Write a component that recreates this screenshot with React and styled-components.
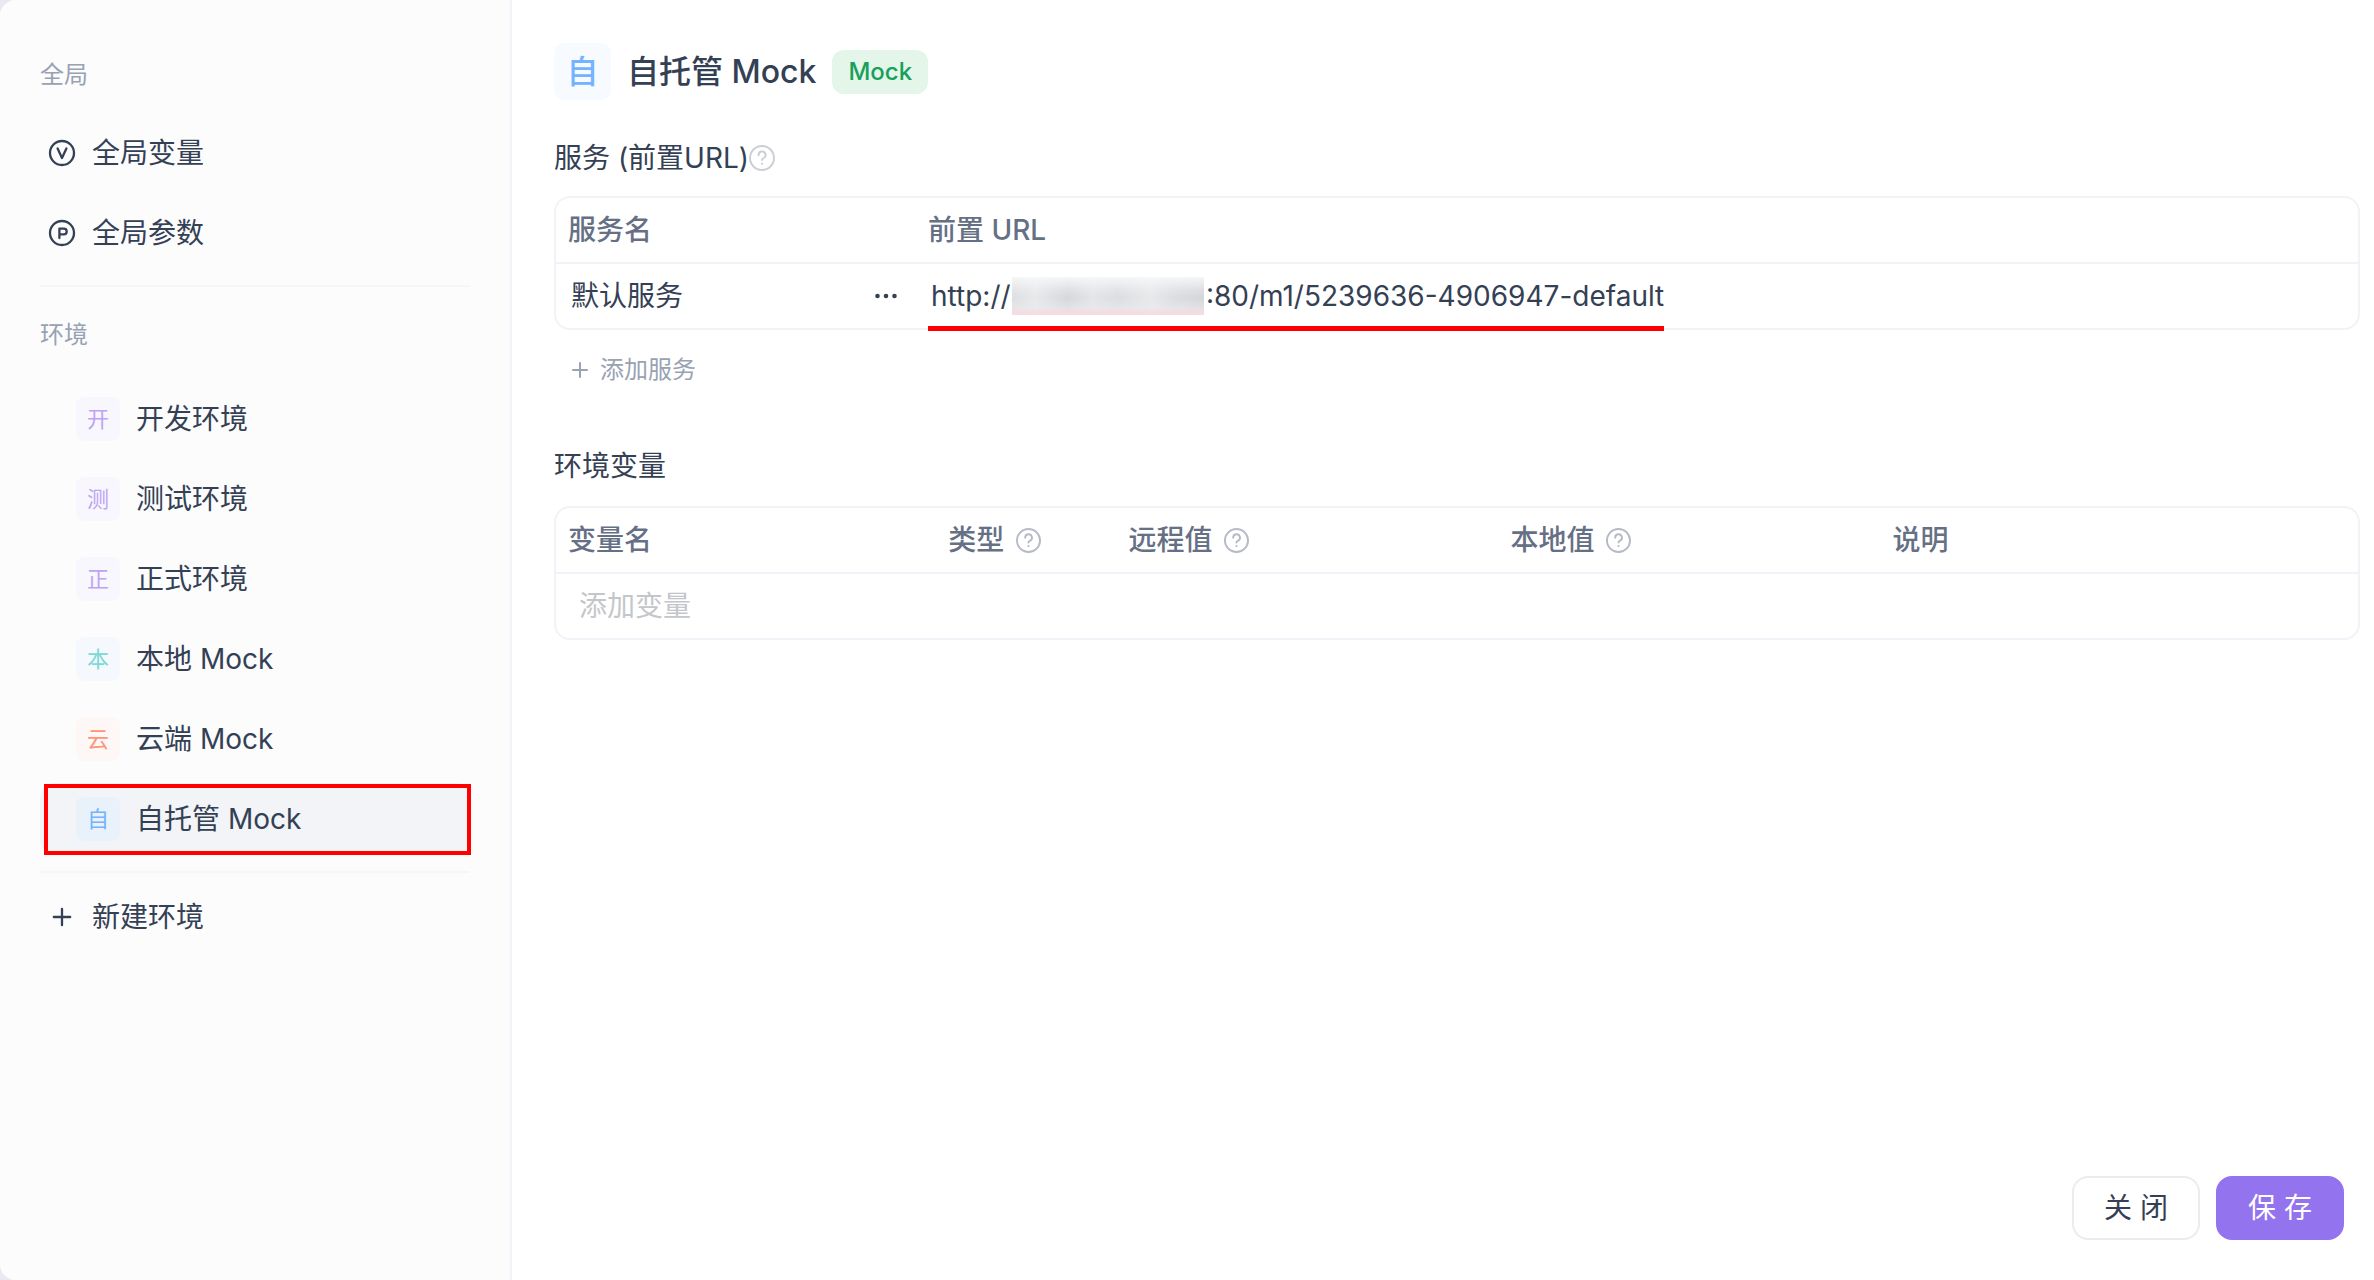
import styled, { createGlobalStyle } from "styled-components";

const GlobalStyle = createGlobalStyle`
  * {
    box-sizing: border-box;
  }

  body {
    margin: 0;
    background-color: #e9e9f1;
    font-family: Inter, "Noto Sans CJK SC", sans-serif;
    font-size: 28px;
    line-height: 40px;
    color: #344054;
  }

  button,
  input {
    font: inherit;
    color: inherit;
  }
`;

const Dialog = styled.div`
  display: flex;
  min-height: 100vh;
  background-color: #fff;
  border-radius: 16px 0 0 16px;
  overflow: hidden;
`;

const Sidebar = styled.nav`
  flex: 0 0 512px;
  padding: 55px 40px;
  background-color: #fcfcfd;
  border-right: 2px solid #f2f2f8;
`;

const GroupTitle = styled.h2`
  margin: 0;
  font-size: 24px;
  font-weight: 400;
  color: #98a2b3;
`;

const List = styled.ul`
  display: flex;
  flex-direction: column;
  gap: 8px;
  margin: 0;
  padding: ${(props) => props.$top}px 0 ${(props) => props.$bottom}px;
  list-style: none;
`;

const NavItem = styled.button`
  display: flex;
  align-items: center;
  gap: 16px;
  width: 100%;
  height: 72px;
  padding: 0 ${(props) => (props.$nested ? 36 : 8)}px;
  border: 0;
  border-radius: 16px;
  background-color: ${(props) => (props.$active ? "#f2f4f8" : "transparent")};
  text-align: left;
  cursor: pointer;
  position: relative;

  svg {
    width: 28px;
    height: 28px;
  }
`;

/* red frame over the chosen environment */
const Highlight = styled.span`
  position: absolute;
  inset: 1px -1px 0 4px;
  border: 4px solid #ff0000;
`;

const Rule = styled.hr`
  height: 2px;
  margin: 0;
  border: 0;
  background-color: #f6f6f8;
`;

const Tile = styled.span`
  display: flex;
  flex: none;
  align-items: center;
  justify-content: center;
  width: ${(props) => (props.$large ? 57 : 44)}px;
  height: ${(props) => (props.$large ? 57 : 44)}px;
  border-radius: ${(props) => (props.$large ? 10 : 8)}px;
  font-size: ${(props) => (props.$large ? 32 : 22)}px;
  font-weight: ${(props) => (props.$large ? 500 : 400)};
  color: ${(props) => props.$color};
  background-color: ${(props) => props.$bg};
`;

const Main = styled.main`
  display: flex;
  flex-direction: column;
  flex: 1;
  min-width: 0;
  padding: 43px 14px 40px 42px;
`;

const Header = styled.header`
  display: flex;
  align-items: center;
  gap: 16px;
`;

const Title = styled.h1`
  margin: 0;
  font-size: 32px;
  font-weight: 500;
`;

const Badge = styled.span`
  padding: 2px 16px;
  border-radius: 12px;
  font-size: 24px;
  font-weight: 500;
  color: #17a05a;
  background-color: #e4f5ea;
`;

const SectionTitle = styled.h2`
  display: flex;
  align-items: center;
  margin: ${(props) => props.$top}px 0 ${(props) => props.$bottom}px;
  font-size: 28px;
  font-weight: 400;
`;

const Panel = styled.div`
  border: 2px solid #f2f2f8;
  border-radius: 16px;
`;

const Table = styled.table`
  width: 100%;
  table-layout: fixed;
  border-collapse: separate;
  border-spacing: 0;

  th,
  td {
    height: 64px;
    padding: 0 0 0 12px;
    text-align: left;
    white-space: nowrap;
  }

  th {
    height: 66px;
    border-bottom: 2px solid #f2f2f8;
    font-weight: 500;
    color: #667085;
  }

  td {
    padding-left: 15px;
  }
`;

const HeadLabel = styled.span`
  display: flex;
  align-items: center;
  gap: 12px;
`;

const ServiceCell = styled.div`
  display: flex;
  align-items: center;
  justify-content: space-between;
  padding-right: 16px;
`;

const IconButton = styled.button`
  display: flex;
  padding: 0;
  border: 0;
  background: none;
  cursor: pointer;
`;

const Url = styled.span`
  display: inline-flex;
  align-items: center;
  height: 64px;
  position: relative;

  /* red marker line under the address */
  &::after {
    content: "";
    position: absolute;
    left: -3px;
    right: 0;
    bottom: -3px;
    height: 5px;
    background-color: #ff0000;
  }
`;

const Mask = styled.span`
  width: 192px;
  height: 38px;
  margin-left: -16px;
  margin-right: 2px;
  position: relative;
  background: linear-gradient(
      to bottom,
      rgba(247, 248, 248, 0.95),
      rgba(240, 241, 242, 0.3) 35%,
      rgba(240, 241, 242, 0) 55%,
      rgba(236, 236, 238, 0.5) 80%,
      rgba(248, 220, 225, 0.9) 92%
    ),
    linear-gradient(
      to right,
      #dcdee1,
      #e8e9eb 12%,
      #d5d7db 29%,
      #e4e5e8 42%,
      #dbdde1 55%,
      #e8e9eb 72%,
      #dcdde1 85%,
      #d4d5da
    );
`;

const AddButton = styled.button`
  display: flex;
  align-items: center;
  align-self: flex-start;
  gap: 8px;
  margin: 20px 0 0 14px;
  padding: 0;
  border: 0;
  background: none;
  font-size: 24px;
  color: #98a2b3;
  cursor: pointer;
`;

const CellInput = styled.input`
  width: 100%;
  padding: 0 8px;
  border: 0;
  outline: 0;
  background: none;

  &::placeholder {
    color: #c4c6ca;
    opacity: 1;
  }
`;

const Footer = styled.footer`
  display: flex;
  justify-content: flex-end;
  gap: 16px;
  margin-top: auto;
  padding-right: 16px;
`;

const Button = styled.button`
  width: 128px;
  height: 64px;
  padding: 0;
  border: 2px solid ${(props) => (props.$primary ? "#9373ee" : "#ebebf2")};
  border-radius: 16px;
  color: ${(props) => (props.$primary ? "#fff" : "#344054")};
  background-color: ${(props) => (props.$primary ? "#9373ee" : "#fff")};
  cursor: pointer;
`;

const VariableIcon = () => (
  <svg viewBox="0 0 28 28" fill="none" stroke="currentColor" strokeWidth="2.3" strokeLinecap="round" strokeLinejoin="round">
    <circle cx="14" cy="14" r="12" />
    <path d="M9.6 9.5 14 19l4.4-9.5" />
  </svg>
);

const ParamIcon = () => (
  <svg viewBox="0 0 28 28" fill="none" stroke="currentColor" strokeWidth="2.3" strokeLinecap="round" strokeLinejoin="round">
    <circle cx="14" cy="14" r="12" />
    <path d="M11.4 19V9.7h4.5a2.8 2.8 0 0 1 0 5.6h-4.5" />
  </svg>
);

const PlusIcon = ({ size = 28 }) => (
  <svg width={size} height={size} viewBox="0 0 28 28" fill="none" stroke="currentColor" strokeWidth="2.3" strokeLinecap="round">
    <path d="M14 5.8v16.4M5.8 14h16.4" />
  </svg>
);

const DotsIcon = () => (
  <svg width="28" height="28" viewBox="0 0 28 28" fill="currentColor">
    <circle cx="5.5" cy="14" r="2.3" />
    <circle cx="14" cy="14" r="2.3" />
    <circle cx="22.5" cy="14" r="2.3" />
  </svg>
);

const HelpIcon = ({ size = 25, color = "#b4bac6" }) => (
  <svg width={size} height={size} viewBox="0 0 26 26" fill="none" stroke={color} strokeWidth="2" strokeLinecap="round" strokeLinejoin="round">
    <circle cx="13" cy="13" r="12" />
    <path d="M9.6 10.2a3.5 3.5 0 1 1 5.1 2.9c-1.2.6-1.7 1-1.7 2" />
    <circle cx="13" cy="18.8" r="1.1" fill={color} stroke="none" />
  </svg>
);

const environments = [
  { mark: "开", name: "开发环境", color: "#bda4f5", bg: "#f8f7fd" },
  { mark: "测", name: "测试环境", color: "#bda4f5", bg: "#f8f7fd" },
  { mark: "正", name: "正式环境", color: "#bda4f5", bg: "#f8f7fd" },
  { mark: "本", name: "本地 Mock", color: "#7bd8d5", bg: "#f5f9fd" },
  { mark: "云", name: "云端 Mock", color: "#ff9478", bg: "#fdf7f5" },
  { mark: "自", name: "自托管 Mock", color: "#74b4ff", bg: "#e9f1fa", active: true },
];

const App = () => {
  return (
    <>
      <GlobalStyle />
      <Dialog>
        <Sidebar>
          <GroupTitle>全局</GroupTitle>
          <List $top={22} $bottom={16}>
            <li>
              <NavItem>
                <VariableIcon />
                全局变量
              </NavItem>
            </li>
            <li>
              <NavItem>
                <ParamIcon />
                全局参数
              </NavItem>
            </li>
          </List>
          <Rule />
          <List as="div" $top={28} $bottom={0}>
            <GroupTitle>环境</GroupTitle>
          </List>
          <List $top={28} $bottom={16}>
            {environments.map((env) => (
              <li key={env.name}>
                <NavItem $nested $active={env.active}>
                  <Tile $color={env.color} $bg={env.bg}>
                    {env.mark}
                  </Tile>
                  {env.name}
                  {env.active && <Highlight />}
                </NavItem>
              </li>
            ))}
          </List>
          <Rule />
          <List as="div" $top={8} $bottom={0}>
            <NavItem>
              <PlusIcon />
              新建环境
            </NavItem>
          </List>
        </Sidebar>

        <Main>
          <Header>
            <Tile $large $color="#74b4ff" $bg="#f7faff">
              自
            </Tile>
            <Title>自托管 Mock</Title>
            <Badge>Mock</Badge>
          </Header>

          <SectionTitle $top={38} $bottom={18}>
            服务 (前置URL)
            <HelpIcon size={26} color="#cccfd5" />
          </SectionTitle>
          <Panel>
            <Table>
              <colgroup>
                <col style={{ width: 360 }} />
                <col />
              </colgroup>
              <thead>
                <tr>
                  <th>服务名</th>
                  <th>前置 URL</th>
                </tr>
              </thead>
              <tbody>
                <tr>
                  <td>
                    <ServiceCell>
                      默认服务
                      <IconButton aria-label="更多">
                        <DotsIcon />
                      </IconButton>
                    </ServiceCell>
                  </td>
                  <td>
                    <Url>
                      http://8
                      <Mask />
                      :80/m1/5239636-4906947-default
                    </Url>
                  </td>
                </tr>
              </tbody>
            </Table>
          </Panel>
          <AddButton>
            <PlusIcon size={24} />
            添加服务
          </AddButton>

          <SectionTitle $top={56} $bottom={20}>
            环境变量
          </SectionTitle>
          <Panel>
            <Table>
              <colgroup>
                <col style={{ width: "21.1%" }} />
                <col style={{ width: "10%" }} />
                <col style={{ width: "21.2%" }} />
                <col style={{ width: "21.2%" }} />
                <col />
              </colgroup>
              <thead>
                <tr>
                  <th>变量名</th>
                  <th>
                    <HeadLabel>
                      类型
                      <HelpIcon />
                    </HeadLabel>
                  </th>
                  <th>
                    <HeadLabel>
                      远程值
                      <HelpIcon />
                    </HeadLabel>
                  </th>
                  <th>
                    <HeadLabel>
                      本地值
                      <HelpIcon />
                    </HeadLabel>
                  </th>
                  <th>说明</th>
                </tr>
              </thead>
              <tbody>
                <tr>
                  <td colSpan={5}>
                    <CellInput placeholder="添加变量" aria-label="添加变量" />
                  </td>
                </tr>
              </tbody>
            </Table>
          </Panel>

          <Footer>
            <Button>关 闭</Button>
            <Button $primary>保 存</Button>
          </Footer>
        </Main>
      </Dialog>
    </>
  );
};

export default App;
